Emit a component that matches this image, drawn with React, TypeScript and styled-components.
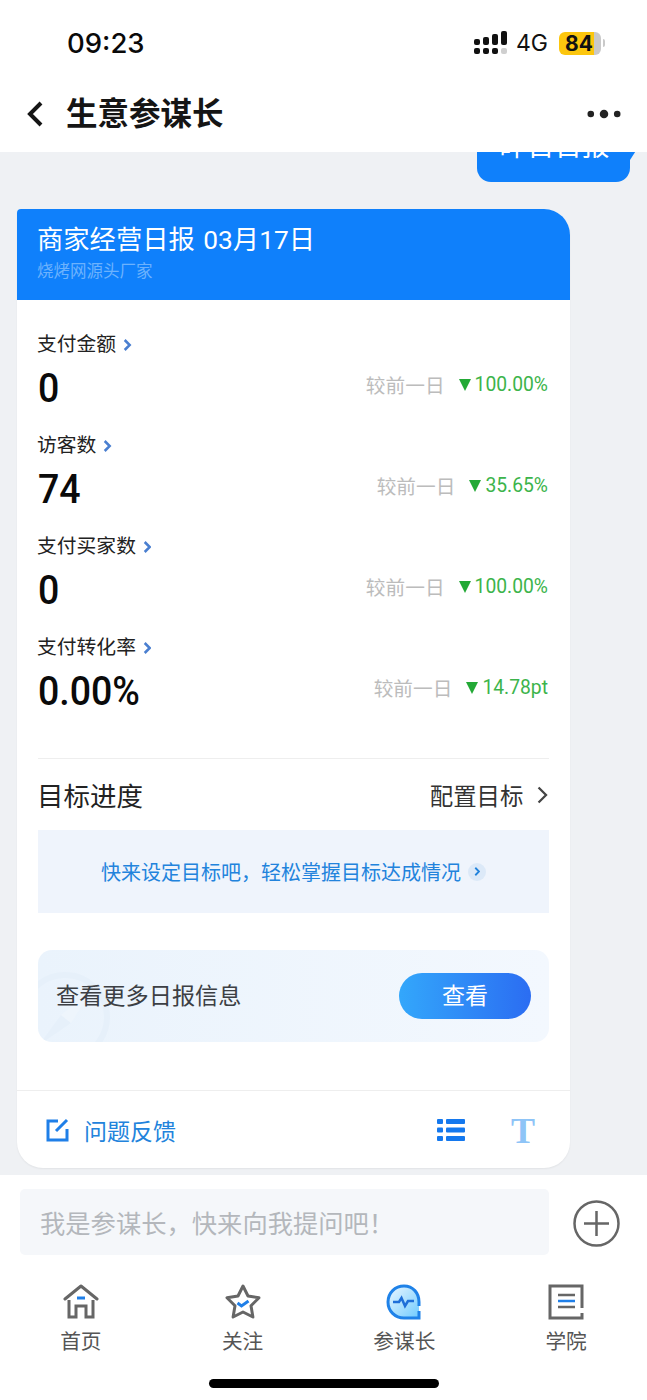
import styled, { createGlobalStyle } from "styled-components";

const GlobalStyle = createGlobalStyle`
  html, body {
    margin: 0;
    padding: 0;
    background: #fff;
  }
  * {
    box-sizing: border-box;
  }
  body {
    font-family: Roboto, "Noto Sans CJK SC", sans-serif;
  }
`;

const Page = styled.div`
  width: 647px;
  height: 1400px;
  display: flex;
  flex-direction: column;
  overflow: hidden;
  background: #fff;
`;

const StatusBar = styled.div`
  height: 76px;
  flex: none;
  padding: 10px 42px 0 67px;
  display: flex;
  align-items: center;
  justify-content: space-between;
`;

const Time = styled.span`
  font-family: Inter, sans-serif;
  font-size: 27.5px;
  font-weight: 500;
  color: #0a0a0a;
`;

const StatusRight = styled.div`
  display: flex;
  align-items: center;
`;

const NetworkLabel = styled.span`
  font-family: Inter, sans-serif;
  font-size: 23px;
  color: #111;
  margin: 0 11px 0 8px;
`;

const Battery = styled.div`
  width: 42px;
  height: 23px;
  border-radius: 6px;
  background: linear-gradient(90deg, #fcc60e 0 84%, #c9c9c9 84%);
  font-family: Inter, sans-serif;
  font-size: 21px;
  font-weight: 700;
  color: #111;
  display: flex;
  align-items: center;
  padding-left: 6px;
`;

const BatteryCap = styled.div`
  width: 2px;
  height: 8px;
  margin-left: 2px;
  border-radius: 0 2px 2px 0;
  background: #c9c9c9;
`;

const NavBar = styled.div`
  height: 76px;
  flex: none;
  padding: 0 26px 0 25px;
  display: flex;
  align-items: center;
`;

const NavTitle = styled.h1`
  flex: 1;
  margin: 2px 0 0 21px;
  font-size: 31.5px;
  font-weight: 700;
  color: #151515;
  line-height: 1;
`;

const ChatArea = styled.div`
  height: 1023px;
  flex: none;
  background: #eff1f4;
  overflow: hidden;
  display: flex;
  flex-direction: column;
`;

const Bubble = styled.div`
  align-self: flex-end;
  position: relative;
  width: 153px;
  height: 60px;
  margin: -30px 17px 0 0;
  padding: 0 0 17px 2px;
  background: #0f80fb;
  border-radius: 14px;
  color: #fff;
  font-size: 27.5px;
  display: flex;
  align-items: center;
  justify-content: center;
  &::after {
    content: "";
    position: absolute;
    right: -9px;
    top: 24px;
    border-top: 14px solid #0f80fb;
    border-right: 9px solid transparent;
  }
`;

const Card = styled.div`
  width: 553px;
  height: 959px;
  margin: 27px 0 0 17px;
  background: #fff;
  border-radius: 4px 26px 26px 26px;
  overflow: hidden;
  box-shadow: 0 1px 2px rgba(0, 0, 0, 0.06);
  display: flex;
  flex-direction: column;
`;

const CardHeader = styled.div`
  height: 91px;
  flex: none;
  background: #0f80fb;
  padding: 13px 20px 0;
`;

const CardTitle = styled.div`
  color: #fff;
  font-size: 26.3px;
  line-height: 36px;
  word-spacing: 2px;
`;

const CardSubtitle = styled.div`
  color: #6cb2fd;
  font-size: 16.5px;
  line-height: 24px;
  margin-top: 2px;
`;

const CardBody = styled.div`
  flex: 1;
  padding: 28px 21px 0;
  display: flex;
  flex-direction: column;
`;

const Metric = styled.div`
  height: 101px;
  flex: none;
`;

const MetricLabel = styled.div`
  display: flex;
  align-items: center;
  gap: 7px;
  margin-left: -1px;
  font-size: 19.8px;
  line-height: 34px;
  color: #222;
`;

const MetricRow = styled.div`
  display: flex;
  align-items: center;
  justify-content: space-between;
  height: 44px;
  margin-top: 4px;
`;

// the digits in the app are taller and narrower than Roboto
const MetricValue = styled.div`
  font-size: 37.5px;
  font-weight: 500;
  color: #0a0a0a;
  transform: scaleY(1.1);
`;

const Compare = styled.div`
  display: flex;
  align-items: center;
  margin: -7px 1px 0 0;
`;

const CompareLabel = styled.span`
  font-size: 19.7px;
  color: #bcbcbc;
  margin-right: 14px;
`;

const Triangle = styled.span`
  width: 0;
  height: 0;
  margin-right: 4px;
  border-left: 6.5px solid transparent;
  border-right: 6.5px solid transparent;
  border-top: 12px solid #23a936;
`;

const CompareValue = styled.span`
  font-size: 19.3px;
  color: #3cb44b;
`;

const Divider = styled.div`
  height: 1px;
  flex: none;
  background: #eeeeee;
`;

const BodyDivider = styled(Divider)`
  margin-top: 26px;
`;

const GoalHeader = styled.div`
  height: 71px;
  flex: none;
  display: flex;
  align-items: center;
  justify-content: space-between;
`;

const GoalTitle = styled.div`
  margin-left: -1px;
  font-size: 26.5px;
  color: #222;
`;

const GoalAction = styled.div`
  display: flex;
  align-items: center;
  gap: 13px;
  font-size: 23.4px;
  color: #333;
`;

const GoalBanner = styled.div`
  height: 83px;
  flex: none;
  background: #eff4fc;
  display: flex;
  align-items: center;
  justify-content: center;
  gap: 7px;
  color: #2283dc;
  font-size: 20px;
`;

const BannerDot = styled.span`
  width: 18px;
  height: 18px;
  border-radius: 50%;
  background: #dce9f8;
  display: flex;
  align-items: center;
  justify-content: center;
`;

const MoreCard = styled.div`
  position: relative;
  height: 92px;
  flex: none;
  margin-top: 37px;
  border-radius: 14px;
  background: linear-gradient(90deg, #eaf3fc, #f3f8fe);
  overflow: hidden;
  padding: 0 18px;
  display: flex;
  align-items: center;
  justify-content: space-between;
`;

const Compass = styled.svg`
  position: absolute;
  left: -21px;
  top: 19px;
`;

const MoreText = styled.span`
  position: relative;
  margin-bottom: 5px;
  font-size: 23.2px;
  color: #3c3f44;
`;

const ViewButton = styled.div`
  position: relative;
  width: 132px;
  height: 46px;
  padding-bottom: 4px;
  border-radius: 23px;
  background: linear-gradient(90deg, #33a7fb, #2b6df2);
  color: #fff;
  font-size: 23px;
  display: flex;
  align-items: center;
  justify-content: center;
`;

const CardFooter = styled.div`
  height: 77px;
  flex: none;
  padding: 0 35px 0 29px;
  display: flex;
  align-items: center;
`;

const Feedback = styled.div`
  flex: 1;
  display: flex;
  align-items: center;
  gap: 14px;
  font-size: 23px;
  color: #2283dc;
`;

const FontMark = styled.span`
  font-family: "Liberation Serif", serif;
  font-size: 36px;
  font-weight: 700;
  color: #8ec4f7;
  margin: 3px 0 0 46px;
  line-height: 1;
`;

const InputBar = styled.div`
  height: 80px;
  flex: none;
  padding: 14px 27px 0 20px;
  display: flex;
  align-items: flex-start;
  justify-content: space-between;
`;

const InputBox = styled.div`
  width: 529px;
  height: 66px;
  border-radius: 5px;
  background: #f5f7fa;
  padding-left: 20px;
  display: flex;
  align-items: center;
  color: #b4b7bc;
  font-size: 25.3px;
`;

const PlusIcon = styled.svg`
  margin-top: 11px;
`;

const TabBar = styled.div`
  flex: none;
  height: 106px;
  padding-top: 29px;
  display: grid;
  grid-template-columns: repeat(4, 161.75px);
`;

const Tab = styled.div`
  display: flex;
  flex-direction: column;
  align-items: center;
  gap: 7px;
  font-size: 20.7px;
  line-height: 30px;
  color: #555;
`;

const HomeIndicator = styled.div`
  width: 230px;
  height: 9px;
  flex: none;
  margin: 18px 0 0 209px;
  border-radius: 5px;
  background: #000;
`;

type MetricData = { label: string; value: string; change: string };

const metrics: MetricData[] = [
  { label: "支付金额", value: "0", change: "100.00%" },
  { label: "访客数", value: "74", change: "35.65%" },
  { label: "支付买家数", value: "0", change: "100.00%" },
  { label: "支付转化率", value: "0.00%", change: "14.78pt" },
];

const Chevron = ({ size = 12, color = "#4a7fd0", width = 2.5 }: { size?: number; color?: string; width?: number }) => (
  <svg width={size * 0.7} height={size} viewBox="0 0 7 12" fill="none">
    <path d="M1 1l5 5-5 5" stroke={color} strokeWidth={width} />
  </svg>
);

const SignalIcon = () => (
  <svg width="34" height="24" viewBox="0 0 34 24">
    <g fill="#111">
      <rect x="0" y="8" width="6" height="6" rx="2" />
      <rect x="0" y="17" width="6" height="6" rx="2" />
      <rect x="9" y="6" width="6" height="8" rx="2" />
      <rect x="9" y="17" width="6" height="6" rx="2" />
      <rect x="18" y="3" width="6" height="11" rx="2" />
      <rect x="18" y="17" width="6" height="6" rx="2" />
      <rect x="27" y="0" width="6" height="14" rx="2" />
    </g>
    <rect x="27" y="17" width="6" height="6" rx="2" fill="#cfcfcf" />
  </svg>
);

const HomeIcon = () => (
  <svg width="36" height="36" viewBox="0 0 36 36" fill="none">
    <path d="M2 15L18 2l16 13" stroke="#666" strokeWidth="3" strokeLinecap="round" strokeLinejoin="round" />
    <path d="M6 16v17h7V22h10v11h7V16" stroke="#666" strokeWidth="3" />
    <path d="M14 14h8" stroke="#1f7fe8" strokeWidth="3" />
  </svg>
);

const StarIcon = () => (
  <svg width="36" height="36" viewBox="0 0 36 36" fill="none">
    <path
      d="M18 2l5 10 11 1.800-8 7.900 1.900 11.300L18 28l-9.900 5L10 21.700l-8-7.900 11-1.800z"
      stroke="#666"
      strokeWidth="3"
      strokeLinejoin="round"
    />
    <path d="M12.500 19l4 3 7-5" stroke="#1f7fe8" strokeWidth="3" />
  </svg>
);

const AdvisorIcon = () => (
  <svg width="36" height="36" viewBox="0 0 36 36" fill="none">
    <defs>
      <linearGradient id="advisorFill" x1="0" y1="0" x2="1" y2="1">
        <stop offset="0" stopColor="#eef8ff" />
        <stop offset="1" stopColor="#6fcbff" />
      </linearGradient>
    </defs>
    <path d="M18 2C9 2 2 9 2 18s7 16 16 16h15v-8" fill="url(#advisorFill)" />
    <path d="M33 22v-4C33 9 27 2 18 2 9 2 2 9 2 18s7 16 16 16h15v-7" fill="url(#advisorFill)" stroke="#1f82e8" strokeWidth="3" />
    <path d="M7 18h6l2.500-4 3.500 8 3-5h6" stroke="#1f6fd8" strokeWidth="2.500" />
  </svg>
);

const CourseIcon = () => (
  <svg width="36" height="36" viewBox="0 0 36 36" fill="none">
    <path d="M34 29v5H2V2h32v22" stroke="#666" strokeWidth="3" />
    <path d="M10 11h17M10 23h17" stroke="#666" strokeWidth="2.500" />
    <path d="M10 17h17" stroke="#1f7fe8" strokeWidth="2.500" />
  </svg>
);

export default function App() {
  return (
    <Page>
      <GlobalStyle />
      <StatusBar>
        <Time>09:23</Time>
        <StatusRight>
          <SignalIcon />
          <NetworkLabel>4G</NetworkLabel>
          <Battery>84</Battery>
          <BatteryCap />
        </StatusRight>
      </StatusBar>

      <NavBar>
        <svg width="20" height="28" viewBox="0 0 20 28" fill="none">
          <path d="M16 3L5 14l11 11" stroke="#151515" strokeWidth="4" />
        </svg>
        <NavTitle>生意参谋长</NavTitle>
        <svg width="34" height="12" viewBox="0 0 36 12" fill="#222">
          <circle cx="4" cy="6" r="3.500" />
          <circle cx="18" cy="6" r="4.500" />
          <circle cx="32" cy="6" r="3.500" />
        </svg>
      </NavBar>

      <ChatArea>
        <Bubble>昨日日报</Bubble>
        <Card>
          <CardHeader>
            <CardTitle>商家经营日报 03月17日</CardTitle>
            <CardSubtitle>烧烤网源头厂家</CardSubtitle>
          </CardHeader>
          <CardBody>
            {metrics.map((item) => (
              <Metric key={item.label}>
                <MetricLabel>
                  {item.label}
                  <Chevron />
                </MetricLabel>
                <MetricRow>
                  <MetricValue>{item.value}</MetricValue>
                  <Compare>
                    <CompareLabel>较前一日</CompareLabel>
                    <Triangle />
                    <CompareValue>{item.change}</CompareValue>
                  </Compare>
                </MetricRow>
              </Metric>
            ))}
            <BodyDivider />
            <GoalHeader>
              <GoalTitle>目标进度</GoalTitle>
              <GoalAction>
                配置目标
                <Chevron size={18} color="#444" width={1.500} />
              </GoalAction>
            </GoalHeader>
            <GoalBanner>
              快来设定目标吧，轻松掌握目标达成情况
              <BannerDot>
                <Chevron size={9} color="#2283dc" />
              </BannerDot>
            </GoalBanner>
            <MoreCard>
              <Compass width="96" height="96" viewBox="0 0 96 96" fill="none">
                <circle cx="48" cy="48" r="42" stroke="#e6f0fa" strokeWidth="6" />
                <path d="M22 76l22-30 10 8z" fill="#e6f0fa" />
                <path d="M74 22L54 54 44 46z" fill="#eef5fc" />
              </Compass>
              <MoreText>查看更多日报信息</MoreText>
              <ViewButton>查看</ViewButton>
            </MoreCard>
          </CardBody>
          <Divider />
          <CardFooter>
            <Feedback>
              <svg width="24" height="24" viewBox="0 0 24 24" fill="none">
                <path d="M12 3H2v19h19V11" stroke="#1f7fe8" strokeWidth="3" />
                <path d="M10 13l11-11" stroke="#1f7fe8" strokeWidth="3" />
              </svg>
              问题反馈
            </Feedback>
            <svg width="28" height="24" viewBox="0 0 28 24" fill="#1478ee">
              <rect x="0" y="1" width="6" height="5" rx="1" />
              <rect x="9" y="1" width="19" height="5" rx="1" />
              <rect x="0" y="9.500" width="6" height="5" rx="1" />
              <rect x="9" y="9.500" width="19" height="5" rx="1" />
              <rect x="0" y="18" width="6" height="5" rx="1" />
              <rect x="9" y="18" width="19" height="5" rx="1" />
            </svg>
            <FontMark>T</FontMark>
          </CardFooter>
        </Card>
      </ChatArea>

      <InputBar>
        <InputBox>我是参谋长，快来向我提问吧！</InputBox>
        <PlusIcon width="47" height="47" viewBox="0 0 47 47" fill="none">
          <circle cx="23.500" cy="23.500" r="22" stroke="#666" strokeWidth="2.500" />
          <path d="M23.500 11v25M11 23.500h25" stroke="#666" strokeWidth="2.500" />
        </PlusIcon>
      </InputBar>

      <TabBar>
        <Tab>
          <HomeIcon />
          首页
        </Tab>
        <Tab>
          <StarIcon />
          关注
        </Tab>
        <Tab>
          <AdvisorIcon />
          参谋长
        </Tab>
        <Tab>
          <CourseIcon />
          学院
        </Tab>
      </TabBar>
      <HomeIndicator />
    </Page>
  );
}
